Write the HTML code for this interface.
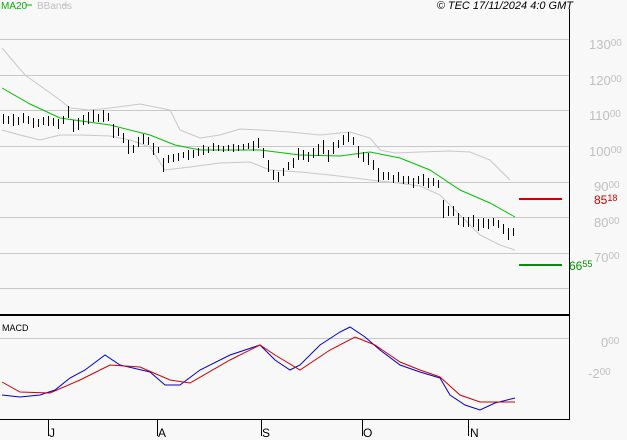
<!DOCTYPE html><html><head><style>body{margin:0;background:#f8f8f8}svg{display:block;font-family:"Liberation Sans",sans-serif}</style></head><body>
<svg width="627" height="440" xmlns="http://www.w3.org/2000/svg">
<rect width="627" height="440" fill="#f8f8f8"/>
<g stroke="#c8c8c8" stroke-width="1" shape-rendering="crispEdges">
<line x1="0" y1="39.5" x2="569" y2="39.5"/><line x1="0" y1="75.5" x2="569" y2="75.5"/><line x1="0" y1="110.5" x2="569" y2="110.5"/><line x1="0" y1="146.5" x2="569" y2="146.5"/><line x1="0" y1="182.5" x2="569" y2="182.5"/><line x1="0" y1="217.5" x2="569" y2="217.5"/><line x1="0" y1="253.5" x2="569" y2="253.5"/><line x1="0" y1="288.5" x2="569" y2="288.5"/><line x1="0" y1="338.5" x2="569" y2="338.5"/>
</g>
<line x1="569.5" y1="9" x2="569.5" y2="419" stroke="#000"/>
<line x1="0" y1="315" x2="569" y2="315" stroke="#000" stroke-width="2"/>
<line x1="0" y1="419.5" x2="570" y2="419.5" stroke="#000"/>
<g stroke="#000"><line x1="48.5" y1="420" x2="48.5" y2="436"/><line x1="157.5" y1="420" x2="157.5" y2="436"/><line x1="261.5" y1="420" x2="261.5" y2="436"/><line x1="362.5" y1="420" x2="362.5" y2="436"/><line x1="468.5" y1="420" x2="468.5" y2="436"/></g>
<g font-size="12" fill="#000"><text x="49" y="437">J</text><text x="158" y="437">A</text><text x="262" y="437">S</text><text x="363" y="437">O</text><text x="470" y="437">N</text></g>
<g fill="none" stroke="#c8c8c8">
<polyline points="2,48 25,75 60,100 70,108 90,110 110,108 140,104 170,110 180,130 200,138 220,135 240,129 260,130 290,132 320,135 350,132 370,138 380,150 395,153 420,152 450,151 470,152 490,160 510,180"/>
<polyline points="2,130 20,135 40,140 60,135 80,135 110,136 130,140 150,147 165,170 190,167 220,163 250,162 270,170 300,172 330,175 355,178 370,180 390,182 420,186 440,195 460,215 480,235 500,245 515,250"/>
</g>
<polyline fill="none" stroke="#00c000" points="2,88 30,104 60,118 110,125 150,135 175,145 200,150 260,150 300,155 340,156 370,152 400,158 430,170 460,190 490,203 515,217"/>
<path stroke="#000" fill="none" shape-rendering="crispEdges" d="M3.5 114v10M8.5 116v8M13.5 114v12M18.5 117v8M23.5 113v10M28.5 116v8M33.5 118v10M38.5 119v8M43.5 117v8M48.5 116v10M53.5 118v8M58.5 119v10M63.5 116v8M68.5 106v12M73.5 120v12M78.5 118v12M83.5 115v10M88.5 112v12M93.5 110v12M98.5 114v8M103.5 110v12M108.5 113v8M113.5 124v14M118.5 128v8M123.5 133v10M128.5 140v14M133.5 145v8M138.5 137v10M143.5 134v10M148.5 137v8M153.5 143v12M158.5 147v6M163.5 158v14M168.5 155v8M173.5 154v8M178.5 153v8M183.5 152v6M188.5 150v10M193.5 150v8M198.5 148v8M203.5 145v10M208.5 147v6M213.5 143v8M218.5 145v6M223.5 146v6M228.5 145v6M233.5 144v8M238.5 145v6M243.5 144v6M248.5 143v6M253.5 141v10M258.5 138v10M263.5 148v10M268.5 160v12M273.5 170v10M278.5 172v10M283.5 168v8M288.5 162v8M293.5 158v10M298.5 148v12M303.5 150v10M308.5 152v10M313.5 148v10M318.5 144v12M323.5 140v14M328.5 150v12M333.5 142v12M338.5 140v8M343.5 135v10M348.5 132v10M353.5 137v8M358.5 146v12M363.5 152v10M368.5 153v12M373.5 160v10M378.5 168v14M383.5 172v8M388.5 172v8M393.5 175v8M398.5 172v10M403.5 176v8M408.5 176v8M413.5 178v10M418.5 176v8M423.5 174v12M428.5 178v10M433.5 178v8M438.5 180v8M443.5 200v18M448.5 206v10M453.5 206v10M458.5 213v12M463.5 217v10M468.5 217v10M473.5 215v12M478.5 219v12M483.5 218v10M488.5 219v10M493.5 218v8M498.5 220v8M503.5 224v10M508.5 228v12M513.5 228v8"/>
<polyline fill="none" stroke="#0000d0" points="2,395 20,397 40,395 55,390 70,378 85,370 105,355 120,365 150,372 165,385 180,385 200,370 230,355 260,345 275,360 290,370 300,365 320,345 340,332 350,327 365,337 380,350 400,365 420,372 440,378 450,395 465,405 480,410 495,403 515,398"/>
<polyline fill="none" stroke="#d00000" points="2,382 20,392 50,393 80,380 110,365 140,367 170,380 190,383 230,360 260,345 275,355 300,370 330,350 355,337 375,345 400,362 420,370 440,377 460,395 480,402 495,402 515,402"/>
<line x1="519" y1="199" x2="562" y2="199" stroke="#d00000" stroke-width="2"/>
<line x1="519" y1="265" x2="562" y2="265" stroke="#009000" stroke-width="2"/>
<g font-size="13" fill="#c0c0c0">
<text x="589" y="49">130<tspan font-size="10" dy="-3">00</tspan></text>
<text x="589" y="85">120<tspan font-size="10" dy="-3">00</tspan></text>
<text x="589" y="120">110<tspan font-size="10" dy="-3">00</tspan></text>
<text x="589" y="156">100<tspan font-size="10" dy="-3">00</tspan></text>
<text x="594" y="191">90<tspan font-size="10" dy="-3">00</tspan></text>
<text x="594" y="227">80<tspan font-size="10" dy="-3">00</tspan></text>
<text x="594" y="262">70<tspan font-size="10" dy="-3">00</tspan></text>
<text x="601" y="347">0<tspan font-size="10" dy="-3">00</tspan></text>
<text x="588" y="378">-2<tspan font-size="10" dy="-3">00</tspan></text>
</g>
<text x="594" y="204" font-size="12" fill="#d00000">85<tspan font-size="9" dy="-3">18</tspan></text>
<text x="569" y="270" font-size="12" fill="#009000">66<tspan font-size="9" dy="-3">55</tspan></text>
<text x="1" y="9" font-size="10" fill="#00b000">MA20</text><line x1="26" y1="5" x2="32" y2="5" stroke="#00b000"/>
<text x="37" y="9" font-size="10" fill="#c0c0c0">BBands</text><line x1="62" y1="5" x2="68" y2="5" stroke="#c0c0c0"/>
<text x="573" y="9" font-size="11" font-style="italic" text-anchor="end" fill="#000">© TEC 17/11/2024 4:0 GMT</text>
<text x="2" y="331" font-size="9" fill="#000">MACD</text>
</svg></body></html>
